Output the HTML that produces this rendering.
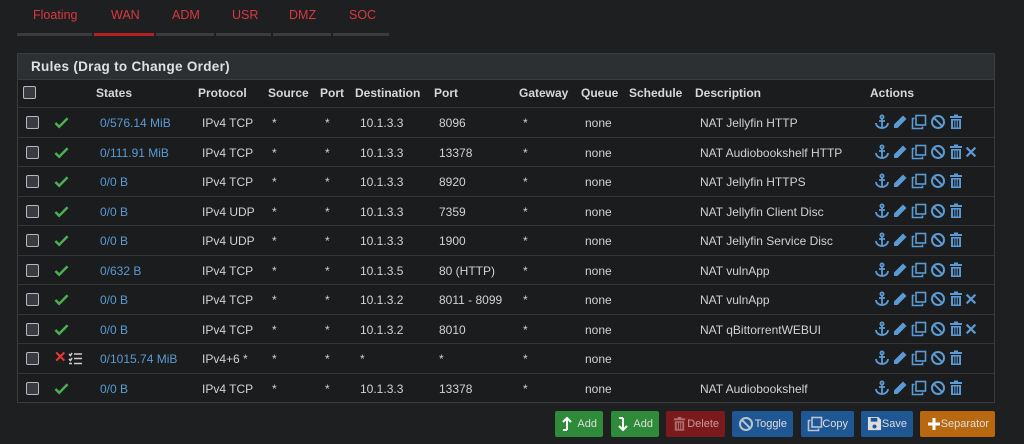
<!DOCTYPE html><html><head><meta charset="utf-8"><style>
*{margin:0;padding:0;box-sizing:border-box}
body{width:1024px;height:444px;background:#1e1f21;font-family:"Liberation Sans",sans-serif;font-size:12px;color:#d2d2d2;position:relative;overflow:hidden}
.tab{position:absolute;top:8px;color:#d9393f;font-size:12.5px}
.ul{position:absolute;top:33px;height:3px;background:#3a3c3f}
.panel{position:absolute;left:17px;top:53px;width:978px;height:350px;border:1px solid #3a3c3f;background:#1b1c1e}
.head{height:26px;background:#2d3033;color:#e0e0e0;font-weight:bold;font-size:13.5px;letter-spacing:0.3px;padding:5px 0 0 13px;border-bottom:1px solid #3a3c3f}
.row{position:absolute;left:0;width:976px;height:29.5px;border-top:1px solid #343638}
.c{position:absolute;top:8px;white-space:nowrap}
.hd .c{font-weight:bold;color:#d8d8d8;top:6px}
.cb{position:absolute;left:8px;top:8px;width:13px;height:13px;border:1.5px solid #b8b8bc;border-radius:2px;background:#3a3b40}
.lnk{color:#5a9bd3}
.ic{position:absolute;top:6px;left:856px;height:16px}
.btn{position:absolute;top:411px;height:26px;border-radius:2px;color:#ddd;font-size:11px;line-height:26px}
.btn svg{position:absolute;left:6px;top:5px}
.btn span{position:absolute;right:6px}
</style></head><body>
<svg width="0" height="0" style="position:absolute"><defs>
<symbol id="anc" viewBox="0 0 16 16"><g fill="none" stroke="#5b9bd5" stroke-width="1.8"><circle cx="8" cy="3" r="1.6"/><path d="M8 4.6V14M5 7h6M2 9c0 3 3 5 6 5s6-2 6-5"/></g></symbol>
<symbol id="pen" viewBox="0 0 16 16"><path fill="#5b9bd5" d="M11 1.5l3.5 3.5L5.5 14H2v-3.5z"/></symbol>
<symbol id="cpy" viewBox="0 0 16 16"><g fill="none" stroke="#5b9bd5" stroke-width="1.6"><rect x="5" y="1.5" width="9.5" height="9.5"/><path d="M3.5 4.5H1.5v10h10v-2"/></g></symbol>
<symbol id="ban" viewBox="0 0 16 16"><g fill="none" stroke="#5b9bd5" stroke-width="2"><circle cx="8" cy="8" r="6"/><path d="M3.8 3.8l8.4 8.4"/></g></symbol>
<symbol id="trs" viewBox="0 0 16 16"><g fill="#5b9bd5"><rect x="2" y="2" width="12" height="2"/><rect x="6" y="0.5" width="4" height="2"/><path d="M3 5h10v10H3zM5 6.5v7h1.3v-7zM7.4 6.5v7h1.3v-7zM9.8 6.5v7h1.3v-7z" fill-rule="evenodd"/></g></symbol>
<symbol id="x" viewBox="0 0 16 16"><path d="M3 3l10 10M13 3L3 13" stroke="#5b9bd5" stroke-width="2.6"/></symbol>
<symbol id="chk" viewBox="0 0 16 16"><path d="M1.5 8.5l4 4L14.5 3.5" fill="none" stroke="#4cb050" stroke-width="2.6"/></symbol>
</defs></svg>
<div class="tab" style="left:33px">Floating</div><div class="ul" style="left:17px;width:75px"></div>
<div class="tab" style="left:111px">WAN</div><div class="ul" style="left:94px;width:60px;background:#b52225"></div>
<div class="tab" style="left:172px">ADM</div><div class="ul" style="left:156px;width:58px"></div>
<div class="tab" style="left:232px">USR</div><div class="ul" style="left:216px;width:55px"></div>
<div class="tab" style="left:289px">DMZ</div><div class="ul" style="left:273px;width:58px"></div>
<div class="tab" style="left:349px">SOC</div><div class="ul" style="left:333px;width:56px"></div>
<div class="panel">
<div class="head">Rules (Drag to Change Order)</div>
<div class="row hd" style="top:26px;border-top:none;height:27px"><div class="cb" style="top:6px;left:5px"></div>
<div class="c" style="left:78px">States</div><div class="c" style="left:180px">Protocol</div><div class="c" style="left:250px">Source</div><div class="c" style="left:302px">Port</div><div class="c" style="left:337px">Destination</div><div class="c" style="left:416px">Port</div><div class="c" style="left:501px">Gateway</div><div class="c" style="left:563px">Queue</div><div class="c" style="left:611px">Schedule</div><div class="c" style="left:677px">Description</div><div class="c" style="left:852px">Actions</div></div>
<div id="rows"></div>
</div>
<script>
var R=[["0/576.14 MiB","IPv4 TCP","10.1.3.3","8096","NAT Jellyfin HTTP",0],
["0/111.91 MiB","IPv4 TCP","10.1.3.3","13378","NAT Audiobookshelf HTTP",1],
["0/0 B","IPv4 TCP","10.1.3.3","8920","NAT Jellyfin HTTPS",0],
["0/0 B","IPv4 UDP","10.1.3.3","7359","NAT Jellyfin Client Disc",0],
["0/0 B","IPv4 UDP","10.1.3.3","1900","NAT Jellyfin Service Disc",0],
["0/632 B","IPv4 TCP","10.1.3.5","80 (HTTP)","NAT vulnApp",0],
["0/0 B","IPv4 TCP","10.1.3.2","8011 - 8099","NAT vulnApp",1],
["0/0 B","IPv4 TCP","10.1.3.2","8010","NAT qBittorrentWEBUI",1],
["0/1015.74 MiB","IPv4+6 *","*","*","",2],
["0/0 B","IPv4 TCP","10.1.3.3","13378","NAT Audiobookshelf",0]];
var h="";R.forEach(function(r,i){var t=53+i*29.55;
var st=r[5]==2?'<div class="c" style="left:36px;top:7px;color:#e53935;font-weight:bold;font-size:15px;line-height:14px">✕</div><svg class="c" style="left:50px;top:8px" width="14" height="13" viewBox="0 0 14 13"><g stroke="#ccc" stroke-width="1.6"><path d="M1 2l1.5 1.5L4 1M1 7l1.5 1.5L4 6M1 11.5h3M6 2h8M6 6.5h8M6 11.5h8"/></g></svg>':'<svg class="c" style="left:36px;top:7px" width="15" height="15"><use href="#chk" width="15" height="15"/></svg>';
var ic='<svg width="92" height="16" class="ic"><use href="#anc" x="0" width="16" height="16"/><use href="#pen" x="18" width="16" height="16"/><use href="#cpy" x="37" width="16" height="16"/><use href="#ban" x="56" width="16" height="16"/><use href="#trs" x="74" width="16" height="16"/></svg>'+(r[5]==1?'<svg width="14" height="16" class="ic" style="left:946px;top:7px"><use href="#x" width="14" height="14"/></svg>':'');
h+='<div class="row" style="top:'+t+'px"><div class="cb"></div>'+st+'<div class="c lnk" style="left:82px">'+r[0]+'</div><div class="c" style="left:184px">'+r[1]+'</div><div class="c" style="left:254px">*</div><div class="c" style="left:307px">*</div><div class="c" style="left:342px">'+r[2]+'</div><div class="c" style="left:421px">'+r[3]+'</div><div class="c" style="left:505px">*</div><div class="c" style="left:567px">none</div><div class="c" style="left:682px">'+r[4]+'</div>'+ic+'</div>';});
document.getElementById('rows').innerHTML=h;
</script>
<div class="btn" style="left:555px;width:48px;background:#2e8b3a"><svg width="12" height="16" viewBox="0 0 12 16"><path d="M6 14V2M2 6l4-4 4 4M6 14H2" stroke="#fff" stroke-width="2" fill="none"/></svg><span>Add</span></div>
<div class="btn" style="left:611px;width:48px;background:#2e8b3a"><svg width="12" height="16" viewBox="0 0 12 16"><path d="M6 2v12M2 10l4 4 4-4M6 2H2" stroke="#fff" stroke-width="2" fill="none"/></svg><span>Add</span></div>
<div class="btn" style="left:666px;width:59px;background:#7a1a1c;color:#c99"><svg width="15" height="16" viewBox="0 0 16 16"><g fill="#b07070"><rect x="2" y="2" width="12" height="2"/><rect x="6" y="0.5" width="4" height="2"/><path d="M3 5h10v10H3zM5 6.5v7h1.3v-7zM7.4 6.5v7h1.3v-7zM9.8 6.5v7h1.3v-7z" fill-rule="evenodd"/></g></svg><span>Delete</span></div>
<div class="btn" style="left:732px;width:61px;background:#1f5694"><svg width="16" height="16" viewBox="0 0 16 16"><g fill="none" stroke="#b8c4d4" stroke-width="2"><circle cx="8" cy="8" r="6"/><path d="M3.8 3.8l8.4 8.4"/></g></svg><span>Toggle</span></div>
<div class="btn" style="left:801px;width:53px;background:#1f5694"><svg width="16" height="16" viewBox="0 0 16 16"><g fill="none" stroke="#b8c4d4" stroke-width="1.6"><rect x="5" y="1.5" width="9.5" height="9.5"/><path d="M3.5 4.5H1.5v10h10v-2"/></g></svg><span>Copy</span></div>
<div class="btn" style="left:861px;width:52px;background:#1f5694"><svg width="15" height="15" viewBox="0 0 16 16"><path d="M1 1h11l3 3v11H1z M4 2v4h7V2z M8 9a2.2 2.2 0 1 0 .01 0" fill="#ddd" fill-rule="evenodd"/></svg><span>Save</span></div>
<div class="btn" style="left:920px;width:75px;background:#b8690f"><svg width="16" height="16"><path d="M8 2v12M2 8h12" stroke="#fff" stroke-width="3"/></svg><span>Separator</span></div>
</body></html>
